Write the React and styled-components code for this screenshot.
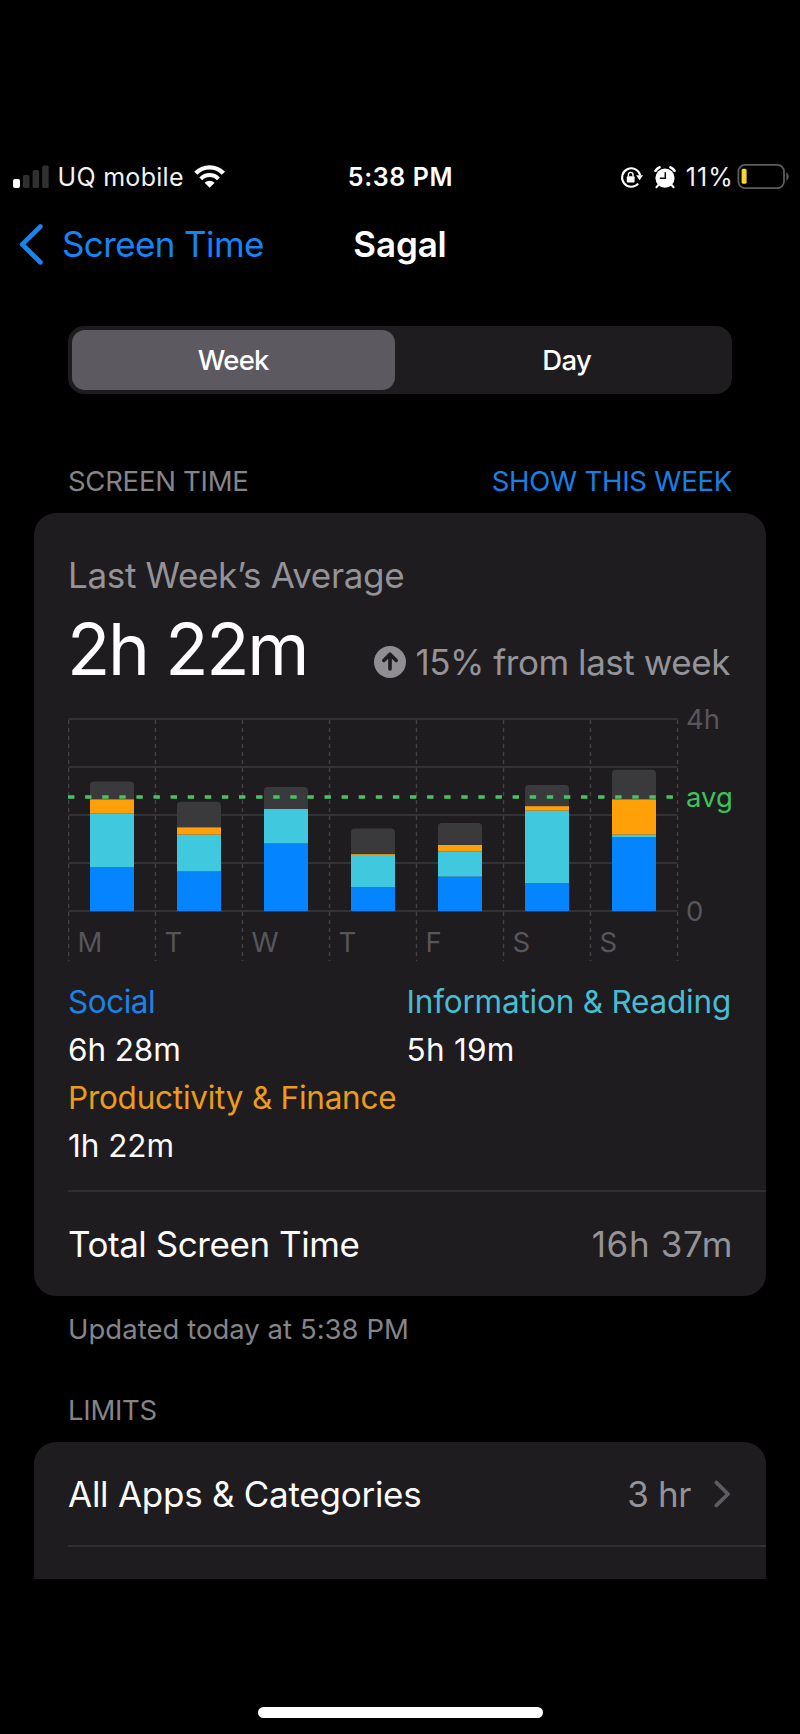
import React, { useState } from "react";
import styled, { createGlobalStyle } from "styled-components";

const SERIES_COLORS = ["#0584ff", "#40c8de", "#ffa008", "#3a393b"];

// minutes per day: social, reading, finance, everything else
const WEEK = [
  { day: "M", minutes: [55, 67, 17.5, 22.5] },
  { day: "T", minutes: [49.5, 46, 9, 32] },
  { day: "W", minutes: [84.5, 43, 0, 27.5] },
  { day: "T", minutes: [30, 40, 1, 32] },
  { day: "F", minutes: [43, 31.5, 8, 27.5] },
  { day: "S", minutes: [35, 90.5, 5.5, 26.5] },
  { day: "S", minutes: [92.5, 3, 44, 37] },
];

const CATEGORIES = [
  { name: "Social", time: "6h 28m", color: "#1c82e8", spacing: -0.48, timeSpacing: -0.1 },
  { name: "Information & Reading", time: "5h 19m", color: "#48bdd2", spacing: -0.2, timeSpacing: 0.25 },
  { name: "Productivity & Finance", time: "1h 22m", color: "#eb9c1c", spacing: -0.24, timeSpacing: -0.04 },
];

function UsageChart() {
  const top = 17;
  const bottom = 209;
  const left = 0.5;
  const column = 87;
  const perMinute = (bottom - top) / 240;
  const right = left + column * 7;

  return (
    <ChartSvg width="672" height="263" viewBox="0 0 672 263">
      {[0, 1, 2, 3, 4].map((i) => (
        <GridLine key={i} x1={left} x2={right} y1={top + i * 48} y2={top + i * 48} />
      ))}
      {[0, 1, 2, 3, 4, 5, 6, 7].map((i) => (
        <DayLine key={i} x1={left + i * column} x2={left + i * column} y1={top + 1} y2="259" />
      ))}
      {WEEK.map(({ day, minutes }, i) => {
        const x = left + i * column + 21.5;
        const total = minutes.reduce((a, b) => a + b, 0) * perMinute;
        let y = bottom;
        return (
          <g key={i}>
            <path
              fill={SERIES_COLORS[3]}
              d={`M${x} ${bottom}V${bottom - total + 4}q0 -4 4 -4h36q4 0 4 4V${bottom}z`}
            />
            {minutes.slice(0, 3).map((value, s) => {
              const height = value * perMinute;
              y -= height;
              return <rect key={s} x={x} y={y} width="44" height={height} fill={SERIES_COLORS[s]} />;
            })}
            <ChartText x={left + i * column + 9} y="249.5">{day}</ChartText>
          </g>
        );
      })}
      <AverageLine x1="0" x2={right} y1="95" y2="95" />
      <ChartText x="618" y="27">4h</ChartText>
      <ChartText x="618" y="105" $average>avg</ChartText>
      <ChartText x="618" y="219">0</ChartText>
    </ChartSvg>
  );
}

function StatusIcons() {
  return (
    <>
      <svg width="23" height="23" viewBox="0 0 23 23" fill="none">
        <path d="M20.2 9.2A9.2 9.2 0 1 0 18.2 17.6" stroke="#fff" strokeWidth="2" />
        <path d="M16.2 9.2h6.8l-3.4 5z" fill="#fff" />
        <rect x="6.8" y="10.2" width="7.8" height="6.4" rx="1" fill="#fff" />
        <path d="M8.4 10.5V8.7a2.3 2.3 0 0 1 4.6 0v1.8" stroke="#fff" strokeWidth="1.4" />
      </svg>
      <AlarmSvg width="22" height="23" viewBox="0 0 22 23" fill="none">
        <circle cx="11" cy="12.1" r="9.6" fill="#fff" />
        <path d="M1.5 4.8a10 10 0 0 1 4-3.4" stroke="#fff" strokeWidth="2.6" strokeLinecap="round" />
        <path d="M20.5 4.8a10 10 0 0 0-4-3.4" stroke="#fff" strokeWidth="2.6" strokeLinecap="round" />
        <path d="M4.6 18.8l-2.2 2.4M17.4 18.8l2.2 2.4" stroke="#fff" strokeWidth="2" strokeLinecap="round" />
        <path d="M11.3 6.8v5.4H6.4" stroke="#000" strokeWidth="1.5" strokeLinecap="round" />
      </AlarmSvg>
    </>
  );
}

export default function App() {
  const [range, setRange] = useState("Week");

  return (
    <>
      <GlobalStyle />
      <Screen>
        <StatusBar>
          <StatusLeft>
            <svg width="37" height="24" viewBox="0 0 37 24">
              <rect x="0" y="14" width="7" height="9" rx="2" fill="#fff" />
              <rect x="10" y="10" width="6.5" height="13" rx="1.6" fill="#303030" />
              <rect x="19.6" y="5" width="6.5" height="18" rx="1.6" fill="#303030" />
              <rect x="29.2" y="0.5" width="6.5" height="22.5" rx="1.6" fill="#303030" />
            </svg>
            <Carrier>UQ mobile</Carrier>
            <svg width="32" height="24" viewBox="0 0 32 24" fill="none">
              <path d="M1.8 8.3a19 19 0 0 1 27.6 0" stroke="#fff" strokeWidth="4.4" />
              <path d="M6.8 13.8a12 12 0 0 1 17.6 0" stroke="#fff" strokeWidth="4" />
              <path d="M15.6 22.8l-5-5a7.2 7.2 0 0 1 10 0z" fill="#fff" />
            </svg>
          </StatusLeft>
          <Clock>5:38 PM</Clock>
          <StatusRight>
            <StatusIcons />
            <BatteryLevel>11%</BatteryLevel>
            <svg width="53" height="26" viewBox="0 0 53 26" fill="none">
              <rect x="1.4" y="0.9" width="45.6" height="23.2" rx="6.5" stroke="#5c5c5c" strokeWidth="1.8" />
              <rect x="4.6" y="4.8" width="5" height="15" rx="1.6" fill="#fbd62e" />
              <path d="M49.4 8.6c3 1 3 7 0 8z" fill="#5c5c5c" />
            </svg>
          </StatusRight>
        </StatusBar>

        <NavBar>
          <BackButton>
            <svg width="25" height="42" viewBox="0 0 25 42" fill="none">
              <path d="M21.3 3.6L3.2 21.4l18.1 17.8" stroke="#1485f5" strokeWidth="4.8" strokeLinecap="round" strokeLinejoin="round" />
            </svg>
            Screen Time
          </BackButton>
          <Title>Sagal</Title>
        </NavBar>

        <Segmented>
          {["Week", "Day"].map((name) => (
            <Segment key={name} $selected={range === name} onClick={() => setRange(name)}>
              {name}
            </Segment>
          ))}
        </Segmented>

        <SectionHeader $top={57}>
          <SectionTitle>SCREEN TIME</SectionTitle>
          <SectionLink>SHOW THIS WEEK</SectionLink>
        </SectionHeader>
        <Card>
          <AverageTitle>Last Week’s Average</AverageTitle>
          <AverageRow>
            <AverageTime>2h 22m</AverageTime>
            <Trend>
              <svg width="32" height="32" viewBox="0 0 32 32" fill="none">
                <circle cx="16" cy="16" r="16" fill="#8f8e93" />
                <path d="M16 23V9M9.8 14.4L16 8.2l6.2 6.2" stroke="#1e1c1f" strokeWidth="3.6" strokeLinecap="round" strokeLinejoin="round" />
              </svg>
              15% from last week
            </Trend>
          </AverageRow>
          <UsageChart />
          <Legend>
            {CATEGORIES.map((c) => (
              <div key={c.name}>
                <LegendLine $color={c.color} $spacing={c.spacing}>{c.name}</LegendLine>
                <LegendLine $color="#fbfbfc" $spacing={c.timeSpacing}>{c.time}</LegendLine>
              </div>
            ))}
          </Legend>
          <Divider />
          <Row $height={104}>
            <RowLabel $spacing={-0.44}>Total Screen Time</RowLabel>
            <TotalValue>16h 37m</TotalValue>
          </Row>
        </Card>
        <Footnote>Updated today at 5:38 PM</Footnote>

        <SectionHeader $top={17}>
          <SectionTitle>LIMITS</SectionTitle>
        </SectionHeader>
        <LimitsCard>
          <Row $height={103}>
            <RowLabel $spacing={-0.26}>All Apps &amp; Categories</RowLabel>
            <LimitValue>
              3 hr
              <svg width="17" height="28" viewBox="0 0 17 28" fill="none">
                <path d="M2.4 2.6L14 14 2.4 25.4" stroke="#5d5c61" strokeWidth="3.8" strokeLinecap="round" strokeLinejoin="round" />
              </svg>
            </LimitValue>
          </Row>
          <Divider />
        </LimitsCard>

        <HomeIndicator />
      </Screen>
    </>
  );
}

const GlobalStyle = createGlobalStyle`
  * {
    box-sizing: border-box;
  }
  body {
    margin: 0;
    background: #000;
    font-family: Inter, "Liberation Sans", sans-serif;
  }
  svg {
    display: block;
    flex-shrink: 0;
  }
`;
const Screen = styled.main`
  width: 800px;
  height: 1734px;
  padding-top: 154px;
  background: #000;
  color: #fff;
  overflow: hidden;
  white-space: nowrap;
`;
const StatusBar = styled.header`
  display: grid;
  grid-template-columns: 1fr auto 1fr;
  align-items: center;
  height: 46px;
  padding: 0 10px 0 13px;
  font-size: 25px;
`;
const StatusLeft = styled.div`
  display: flex;
  align-items: center;
`;
const StatusRight = styled.div`
  display: flex;
  align-items: center;
  justify-content: flex-end;
`;
const Carrier = styled.span`
  margin: 0 10px 0 7.5px;
  letter-spacing: 0.3px;
  color: #f2f2f2;
`;
const Clock = styled.span`
  margin: 0 1px 0 -1px;
  font-weight: 600;
  letter-spacing: 0.6px;
`;
const AlarmSvg = styled.svg`
  margin: 0 10px 0 11px;
`;
const BatteryLevel = styled.span`
  letter-spacing: 1.1px;
  margin-right: 3px;
  color: #f2f2f2;
`;
const NavBar = styled.nav`
  display: grid;
  grid-template-columns: 1fr auto 1fr;
  align-items: center;
  height: 90px;
  padding: 0 19px 2px;
  font-size: 35px;
`;
const BackButton = styled.a`
  display: flex;
  align-items: center;
  gap: 18px;
  color: #1485f5;
  letter-spacing: -0.61px;
`;
const Title = styled.h1`
  margin: 0;
  font-size: 35px;
  font-weight: 600;
  letter-spacing: -0.15px;
`;
const Segmented = styled.div`
  display: grid;
  grid-template-columns: 1fr 1fr;
  height: 68px;
  margin: 36px 68px 0;
  border-radius: 16px;
  background: #1f1c20;
`;
const Segment = styled.button`
  margin: 4px 5.5px 4px 4px;
  padding: 0 0 1px;
  border: 0;
  border-radius: 13px;
  background: ${(props) => (props.$selected ? "#5c5a60" : "transparent")};
  color: #fff;
  font-family: inherit;
  font-size: 27.5px;
  font-weight: 500;
  letter-spacing: -0.7px;

  &:last-child {
    margin: 4px 4px 4px 5.5px;
  }
`;
const SectionHeader = styled.div`
  display: flex;
  align-items: center;
  justify-content: space-between;
  height: 62px;
  margin-top: ${(props) => props.$top}px;
  padding: 0 68px 2px;
  font-size: 27.5px;
`;
const SectionTitle = styled.span`
  color: #858489;
  letter-spacing: -0.27px;
`;
const SectionLink = styled.a`
  color: #1780e6;
  letter-spacing: -0.23px;
`;
const Card = styled.section`
  height: 783px;
  margin: 0 34px;
  padding-top: 40px;
  border-radius: 22px;
  background: #1e1c1f;
`;
const AverageTitle = styled.div`
  padding-left: 34px;
  color: #949398;
  font-size: 35px;
  line-height: 44px;
  letter-spacing: -0.33px;
`;
const AverageRow = styled.div`
  display: flex;
  align-items: flex-end;
  justify-content: space-between;
  height: 84px;
  margin-top: 10px;
  padding: 0 36px 0 33px;
`;
const AverageTime = styled.div`
  font-size: 71px;
  line-height: 84px;
  letter-spacing: -2.3px;
`;
const Trend = styled.div`
  display: flex;
  align-items: center;
  gap: 9px;
  height: 58px;
  color: #949398;
  font-size: 35px;
  letter-spacing: -0.45px;
`;
const ChartSvg = styled.svg`
  margin: 11px 0 0 34px;
`;
const GridLine = styled.line`
  stroke: #3b3a3d;
  stroke-width: 1.5;
`;
const DayLine = styled.line`
  stroke: #424144;
  stroke-width: 1.4;
  stroke-dasharray: 4 4;
`;
const AverageLine = styled.line`
  stroke: #46c463;
  stroke-width: 3.6;
  stroke-dasharray: 6.4 10.7;
`;
const ChartText = styled.text`
  fill: ${(props) => (props.$average ? "#3dc35c" : "#57565a")};
  font-size: 27.5px;
`;
const Legend = styled.div`
  display: grid;
  grid-template-columns: 338.5px 1fr;
  margin: 13px 34px 20px;
`;
const LegendLine = styled.div`
  height: 48px;
  color: ${(props) => props.$color};
  font-size: 31.5px;
  line-height: 48px;
  letter-spacing: ${(props) => props.$spacing}px;
`;
const Divider = styled.div`
  height: 2px;
  margin-left: 34px;
  background: #303032;
`;
const Row = styled.div`
  display: flex;
  align-items: center;
  justify-content: space-between;
  height: ${(props) => props.$height}px;
  padding: 0 34px;
  font-size: 35px;
`;
const RowLabel = styled.span`
  color: #fbfbfc;
  letter-spacing: ${(props) => props.$spacing}px;
`;
const TotalValue = styled.span`
  margin-right: -1px;
  color: #949398;
  letter-spacing: 0.65px;
`;
const LimitValue = styled.span`
  display: flex;
  align-items: center;
  gap: 23px;
  margin-right: 1px;
  color: #949398;
  letter-spacing: -0.39px;
`;
const Footnote = styled.p`
  height: 67px;
  margin: 0;
  padding-left: 68px;
  color: #858489;
  font-size: 27.5px;
  line-height: 66px;
  letter-spacing: 0.03px;
`;
const LimitsCard = styled.section`
  height: 137px;
  margin: 0 34px;
  border-radius: 22px 22px 0 0;
  background: #1e1c1f;
`;
const HomeIndicator = styled.div`
  width: 285px;
  height: 11px;
  margin: 128px auto 0;
  border-radius: 6px;
  background: #fff;
`;
